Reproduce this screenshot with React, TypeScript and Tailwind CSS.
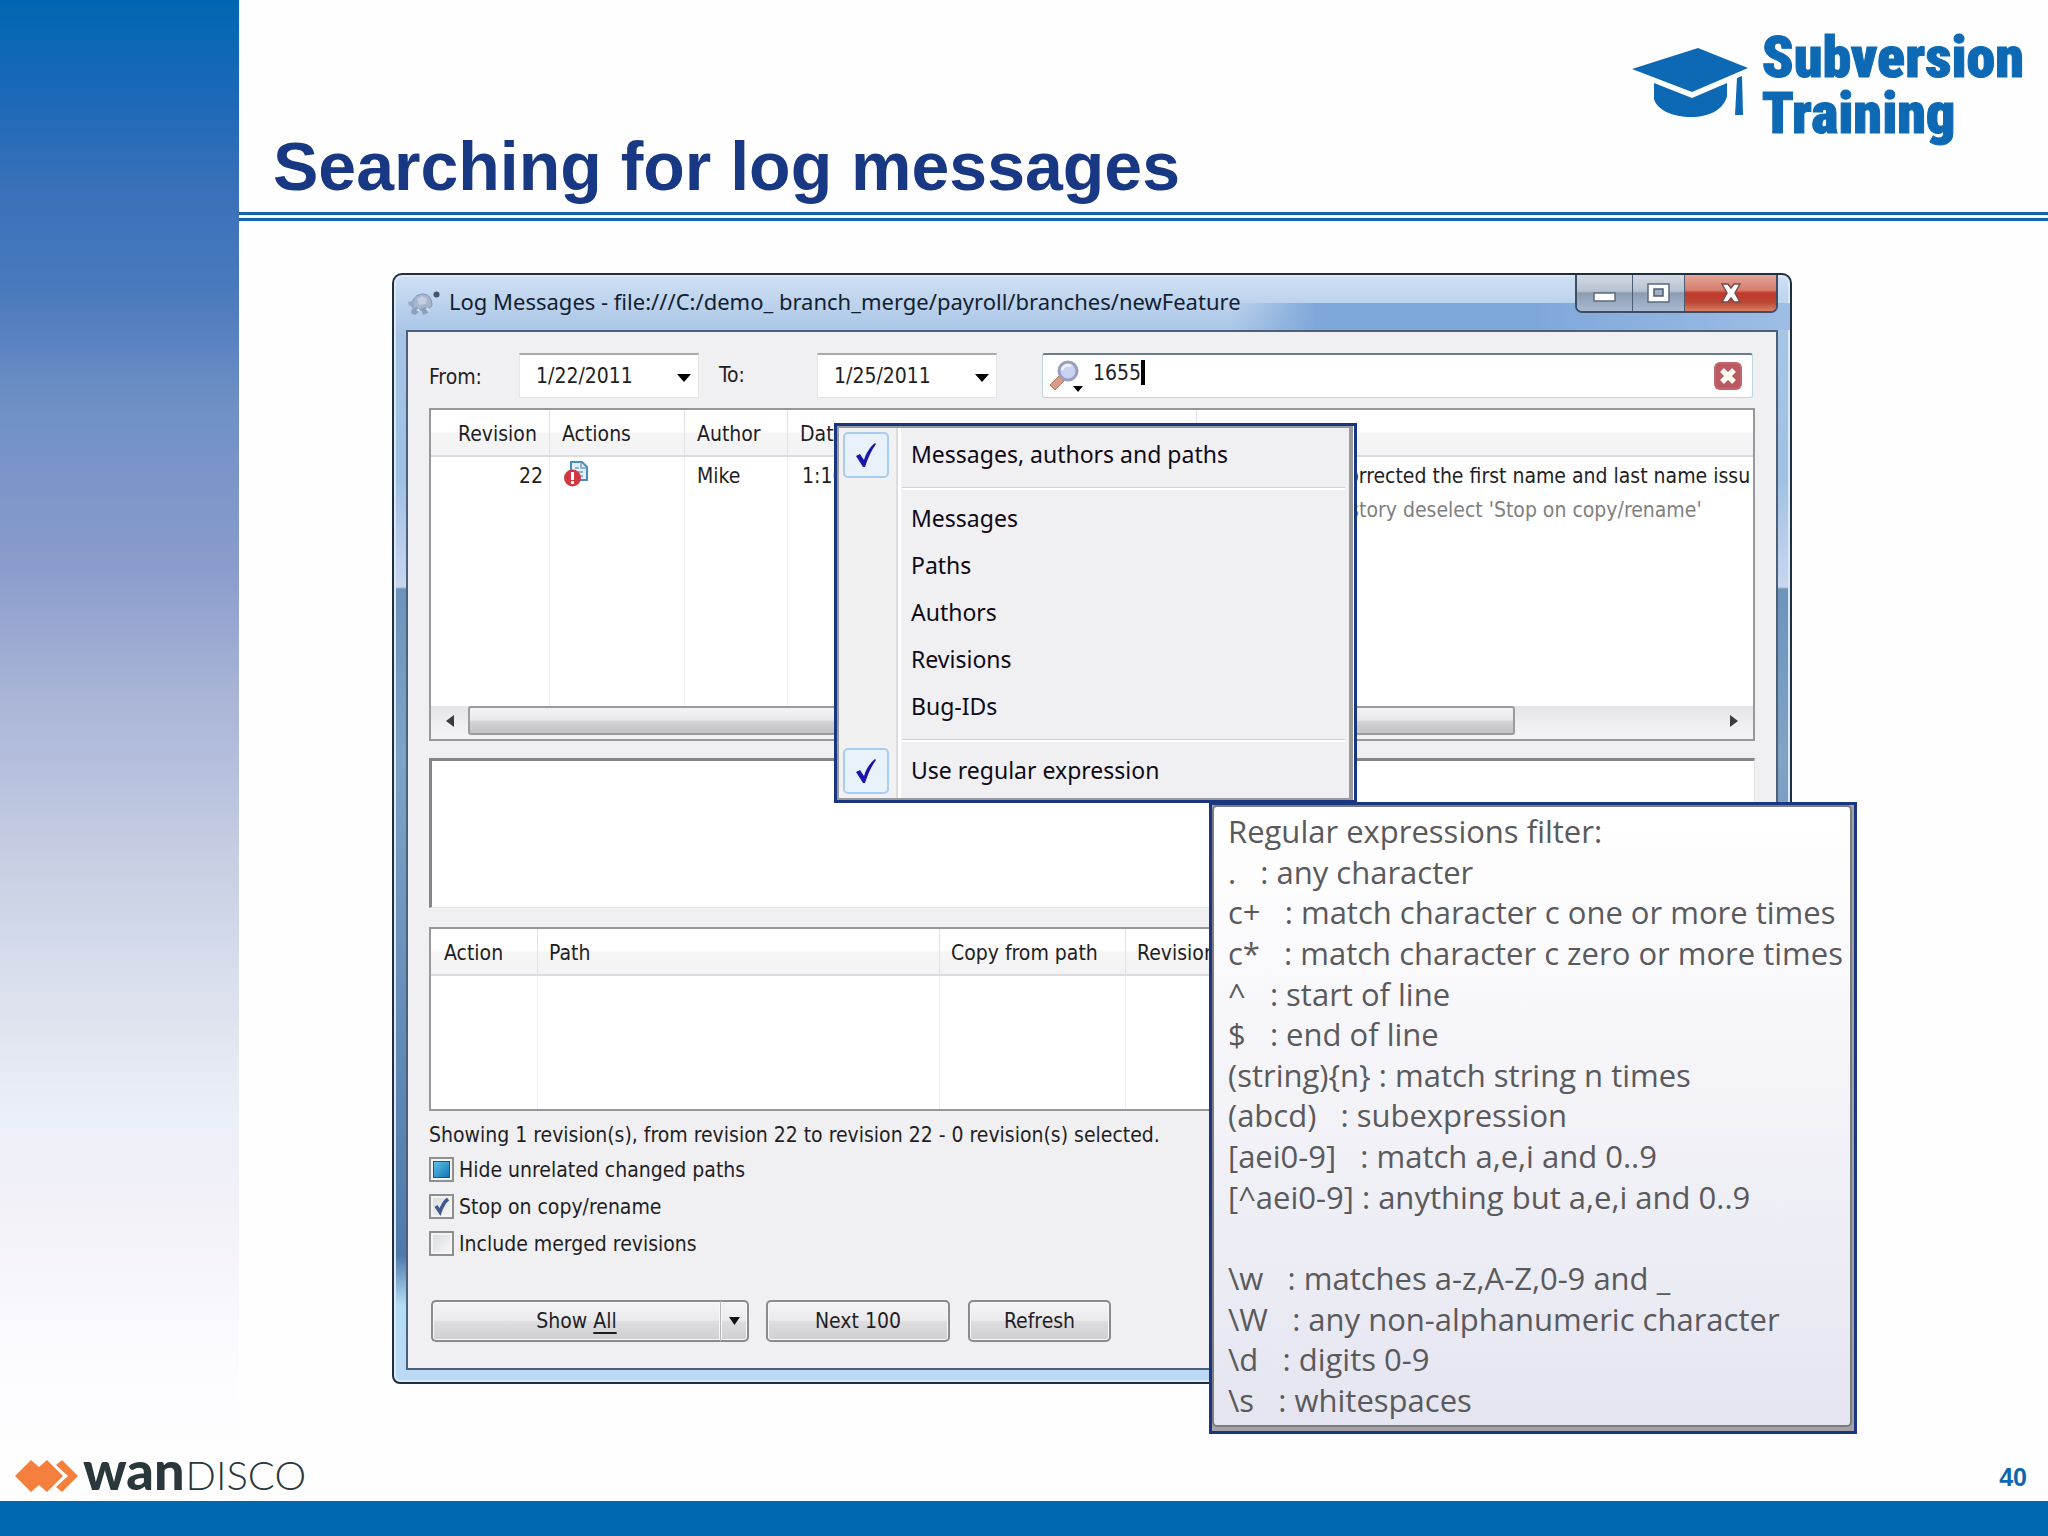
import type { ReactNode } from "react";

const SEGOE = "font-['Noto_Sans',sans-serif]";
const TAHOMA = "font-['DejaVu_Sans_Condensed','DejaVu_Sans',sans-serif]";

function GradCap() {
  return (
    <svg className="mt-[14px] h-[69px] w-[117px]" viewBox="0 0 117 69" fill="#0d69b4" aria-hidden="true">
      <path d="M66 0 L116 20 L60 44 L0 21 Z" />
      <path d="M22 35 L60 50 L95 35 V48 C92 61 78 69 59 69 C41 69 25 62 22 51 Z" />
      <path d="M105 30 L110 28 L111 67 H103 Z" />
    </svg>
  );
}

function Header() {
  return (
    <header className="border-b-[3px] border-[#0f66ad]">
      <div className="mb-[3px] flex h-[215px] justify-between border-b-[3px] border-[#0f66ad] pr-[24px] pl-[34px]">
        <h1 className="self-end pb-[5px] font-['Liberation_Sans',Arial,sans-serif] text-[68px] leading-[82px] font-bold text-[#183884]">
          Searching for log messages
        </h1>
        <div className="flex gap-[13px] pt-[34px]">
          <GradCap />
          <p className="-mt-[5px] font-['Roboto_Condensed','Open_Sans_Condensed',sans-serif] text-[58px] leading-[56px] font-black text-[#0d69b4] [-webkit-text-stroke:1px_#0d69b4]">
            Subversion
            <br />
            Training
          </p>
        </div>
      </div>
    </header>
  );
}

function Turtle() {
  return (
    <svg className="h-[26px] w-[32px]" viewBox="0 0 32 26" aria-hidden="true">
      <path d="M4 17 C4 8 9 4 15 4 C21 4 24 9 24 16 L18 20 H9 Z" fill="#a6b6d0" stroke="#8394b4" strokeWidth="1" />
      <path d="M9 9 L14 6 L19 9 L18 14 L11 15 Z" fill="#c3cee2" />
      <path d="M0 12 L5 11 L6 15 L1 16 Z" fill="#97a8c6" />
      <path d="M4 19 L9 17 L11 22 L7 25 L3 23 Z M13 18 L18 17 L20 23 L15 25 Z" fill="#8e9fbe" />
      <path d="M8 20 L11 19 L12 22 Z M17 19 L20 18 L22 21 Z" fill="#e5edf8" />
      <circle cx="28.500" cy="4.500" r="3" fill="#42536e" />
    </svg>
  );
}

function WindowButtons() {
  const plain =
    "flex items-center justify-center border-r border-[#4b5d76] bg-[linear-gradient(#d3dae3_0%,#b7c2d0_45%,#8c9cb2_50%,#a9bbd1_100%)]";
  return (
    <div className="flex h-[38px] overflow-hidden rounded-b-[7px] border-2 border-t-0 border-[#3e4d63]">
      <button aria-label="Minimize" className={`${plain} w-[56px]`}>
        <svg className="mt-[8px] h-[12px] w-[26px]" viewBox="0 0 26 12">
          <rect x="2" y="2" width="21" height="8" fill="#fff" stroke="#5b6a80" strokeWidth="1.500" />
        </svg>
      </button>
      <button aria-label="Maximize" className={`${plain} w-[52px]`}>
        <svg className="h-[20px] w-[26px]" viewBox="0 0 26 20">
          <rect x="2" y="1" width="21" height="18" fill="#fff" stroke="#5b6a80" strokeWidth="1.500" />
          <rect x="8" y="6" width="9" height="7" fill="#a4b1c3" stroke="#4d5c72" strokeWidth="1.500" />
        </svg>
      </button>
      <button
        aria-label="Close"
        className="flex w-[91px] items-center justify-center bg-[linear-gradient(#e3a598_0%,#d57e6c_42%,#c2382a_50%,#bb4534_75%,#d97f62_100%)]"
      >
        <svg className="h-[22px] w-[26px]" viewBox="0 0 26 22">
          <path
            d="M4 2 H10 L13 6 L16 2 H22 L17 11 L22 20 H16 L13 16 L10 20 H4 L9 11 Z"
            fill="#fff"
            stroke="#7a4a47"
            strokeWidth="1.500"
          />
        </svg>
      </button>
    </div>
  );
}

function DateField({ id, label, value, className }: { id: string; label: string; value: string; className: string }) {
  return (
    <>
      <label htmlFor={id} className={className}>
        {label}
      </label>
      <div className="relative w-[180px]">
        <select
          id={id}
          className="h-full w-full appearance-none border border-t-2 border-[#e6e6e6] border-t-[#a9a9a9] bg-white pr-8 pl-[16px]"
        >
          <option>{value}</option>
        </select>
        <svg className="pointer-events-none absolute top-[21px] right-[8px] h-[8px] w-[14px]" viewBox="0 0 14 8">
          <path d="M0 0 H14 L7 8 Z" fill="#000" />
        </svg>
      </div>
    </>
  );
}

function SearchBox() {
  return (
    <div className="ml-[45px] flex flex-1 items-center rounded-[3px] border border-t-2 border-[#bcd7e0] border-t-[#6b7d88] bg-white pr-[10px] pl-[5px]">
      <svg className="h-[34px] w-[36px]" viewBox="0 0 36 34" aria-hidden="true">
        <path d="M2 26 L11 17 L16 22 L7 31 Z" fill="#d79b86" stroke="#b97660" strokeWidth="1" />
        <circle cx="20" cy="12" r="9" fill="#c9d3f2" stroke="#9a9fc0" strokeWidth="3" />
        <path d="M14 11 C15 7 19 5 23 7" stroke="#eef2fd" strokeWidth="3" fill="none" />
        <path d="M25 27 H35 L30 33 Z" fill="#000" />
      </svg>
      <input
        aria-label="Search log messages"
        defaultValue="1655"
        className="mb-[7px] ml-[9px] w-[48px] bg-transparent leading-[28px] outline-none"
      />
      <span className="mb-[7px] h-[25px] w-[4px] bg-black" />
      <button aria-label="Clear search" className="ml-auto">
        <svg className="h-[28px] w-[28px]" viewBox="0 0 28 28">
          <rect x="0" y="0" width="28" height="28" rx="6" fill="#c5646a" />
          <rect x="2" y="2" width="24" height="24" rx="4" fill="#b95961" />
          <path d="M8 8 L20 20 M20 8 L8 20" stroke="#fffaf0" strokeWidth="5.500" />
        </svg>
      </button>
    </div>
  );
}

const headRow = "h-[47px] bg-[linear-gradient(#ffffff_45%,#f5f5f6_50%,#f3f3f5_100%)]";
const headCell = "border-b-2 border-b-[#dcdcde] border-r border-r-[#e2e2e4] pt-[3px] text-left font-normal";
const bodyCell = "border-r border-[#f0eef2]";

function RevisionList() {
  return (
    <div className="mt-[10px] flex h-[333px] flex-col border-2 border-[#98989b] bg-white">
      <table className="h-px w-full flex-1 table-fixed border-separate border-spacing-0">
        <colgroup>
          <col className="w-[119px]" />
          <col className="w-[135px]" />
          <col className="w-[103px]" />
          <col className="w-[409px]" />
          <col />
        </colgroup>
        <thead>
          <tr className={headRow}>
            <th className={`${headCell} pl-[27px]`}>Revision</th>
            <th className={`${headCell} pl-[12px]`}>Actions</th>
            <th className={`${headCell} pl-[12px]`}>Author</th>
            <th className={`${headCell} pl-[12px]`}>Date</th>
            <th className={`${headCell} border-r-0`} aria-label="Message" />
          </tr>
        </thead>
        <tbody>
          <tr className="h-[36px]">
            <td className={`${bodyCell} pt-[2px] pr-[6px] text-right`}>22</td>
            <td className={`${bodyCell} pl-[14px]`}>
              <svg className="-mt-[2px] h-[26px] w-[25px]" viewBox="0 0 25 26" aria-label="Modified and copied">
                <path d="M7 1 H18 L23 6 V19 H7 Z" fill="#e2effa" stroke="#4d8cba" strokeWidth="2" />
                <path d="M17 1 V7 H23 M11 7 H15 M14 11 H19 M16 15 H19" fill="none" stroke="#6aa2c9" strokeWidth="1.500" />
                <circle cx="8.500" cy="17" r="8.500" fill="#cf3a42" />
                <rect x="7" y="11" width="3" height="8" fill="#fff" />
                <rect x="7" y="20" width="3" height="3" fill="#fff" />
              </svg>
            </td>
            <td className={`${bodyCell} pt-[2px] pl-[12px]`}>Mike</td>
            <td className={`${bodyCell} pt-[2px] pl-[14px]`}>1:16</td>
            <td className="overflow-hidden pt-[2px] pl-[137px] whitespace-nowrap">
              Corrected the first name and last name issu
            </td>
          </tr>
          <tr className="h-[33px]">
            <td className={bodyCell} />
            <td className={bodyCell} />
            <td className={bodyCell} />
            <td className={bodyCell} />
            <td className="pl-[135px] whitespace-nowrap text-[#808080]">history deselect 'Stop on copy/rename'</td>
          </tr>
          <tr>
            <td className={bodyCell} />
            <td className={bodyCell} />
            <td className={bodyCell} />
            <td className={bodyCell} />
            <td />
          </tr>
        </tbody>
      </table>
      <div className="flex h-[33px] shrink-0 bg-[linear-gradient(#e4e4e6,#f0eff1_60%,#f3f2f4)] pb-[4px]">
        <button aria-label="Scroll left" className="flex w-[37px] items-center justify-center">
          <svg className="h-[12px] w-[8px]" viewBox="0 0 8 12">
            <path d="M8 0 V12 L0 6 Z" fill="#3c3c40" />
          </svg>
        </button>
        <div className="flex flex-1">
          <div className="w-[84%] rounded-[3px] border-2 border-[#9c9a9d] bg-[linear-gradient(#f3f2f4_0%,#e8e7e9_48%,#d2d1d4_55%,#c4c3c6_100%)]" />
        </div>
        <button aria-label="Scroll right" className="flex w-[38px] items-center justify-center">
          <svg className="h-[12px] w-[8px]" viewBox="0 0 8 12">
            <path d="M0 0 V12 L8 6 Z" fill="#3c3c40" />
          </svg>
        </button>
      </div>
    </div>
  );
}

function PathList() {
  return (
    <table className="mt-[19px] h-[184px] w-full table-fixed border-separate border-spacing-0 border-2 border-[#98989b] bg-white">
      <colgroup>
        <col className="w-[107px]" />
        <col className="w-[402px]" />
        <col className="w-[186px]" />
        <col />
      </colgroup>
      <thead>
        <tr className={headRow}>
          <th className={`${headCell} pl-[13px]`}>Action</th>
          <th className={`${headCell} pl-[11px]`}>Path</th>
          <th className={`${headCell} pl-[11px]`}>Copy from path</th>
          <th className={`${headCell} border-r-0 pl-[11px]`}>Revision</th>
        </tr>
      </thead>
      <tbody>
        <tr>
          <td className={bodyCell} />
          <td className={bodyCell} />
          <td className={bodyCell} />
          <td />
        </tr>
      </tbody>
    </table>
  );
}

function CheckOption({ label, checked, mark }: { label: string; checked: boolean; mark?: ReactNode }) {
  return (
    <label className="flex h-[37px] items-center gap-[5px]">
      <span className="relative h-[25px] w-[25px]">
        <input
          type="checkbox"
          defaultChecked={checked}
          className="block h-full w-full appearance-none border-2 border-[#8e8f8f] bg-[linear-gradient(135deg,#d9dade,#f8f8f8)] outline-2 -outline-offset-4 outline-[#f4f4f4]"
        />
        <span className="pointer-events-none absolute inset-0 flex items-center justify-center">{mark}</span>
      </span>
      {label}
    </label>
  );
}

const pushButton =
  "h-[42px] rounded-[5px] border-2 border-[#8b8a8d] bg-[linear-gradient(#f4f3f5_0%,#ebeaec_48%,#dddcde_52%,#d0cfd1_100%)] shadow-[inset_0_0_0_1px_#f8f8f8]";

function BottomBar() {
  return (
    <div className="mt-[38px] flex pl-[2px]">
      <div className="flex w-[318px]">
        <button className={`${pushButton} flex-1 rounded-r-none border-r-0`}>
          Show <span className="underline underline-offset-4">All</span>
        </button>
        <button
          aria-label="Show options"
          className={`${pushButton} flex w-[29px] items-center justify-center rounded-l-none border-l border-l-[#b5b4b7]`}
        >
          <svg className="h-[8px] w-[11px]" viewBox="0 0 11 8">
            <path d="M0 0 H11 L5.500 8 Z" fill="#111" />
          </svg>
        </button>
      </div>
      <button className={`${pushButton} ml-[17px] w-[184px]`}>Next 100</button>
      <button className={`${pushButton} ml-[18px] w-[143px]`}>Refresh</button>
    </div>
  );
}

function MenuItem({ label, checked }: { label: string; checked?: boolean }) {
  return (
    <button role="menuitemcheckbox" aria-checked={!!checked} className="flex h-[47px] w-full items-center text-left">
      <span className="flex w-[72px] pl-[4px]">
        {checked && (
          <span className="flex h-[46px] w-[46px] items-center justify-center rounded-[5px] border-2 border-[#a9cdf2] bg-[#e9f2fb]">
            <svg className="h-[24px] w-[20px]" viewBox="0 0 20 24">
              <path d="M0 13 L4 11 L8 17 C10 10 14 4 19 0 L20 1 C15 8 12 15 9 24 H7 Z" fill="#1a14a8" />
            </svg>
          </span>
        )}
      </span>
      <span className="pb-[2px]">{label}</span>
    </button>
  );
}

const MenuLine = () => (
  <div className="mt-[9px] mr-[4px] mb-[5px] ml-[63px] h-[3px] border-t border-b-2 border-[#ffffff] border-t-[#d2d1d3]" />
);

function FilterMenu() {
  return (
    <div
      role="menu"
      className={`absolute top-[148px] left-[440px] w-[523px] border-[3px] border-[#1a3680] bg-white pr-px text-[23px] leading-[30px] text-[#0d0a18] ${SEGOE}`}
    >
      <div className="border-2 border-r-4 border-[#97999a] bg-[linear-gradient(90deg,#f1f1f2_57px,#dcdcde_57px,#dcdcde_59px,#ffffff_59px,#ffffff_62px,#f0eff1_62px)] pt-[3px] pb-[4px]">
        <MenuItem label="Messages, authors and paths" checked />
        <MenuLine />
        <MenuItem label="Messages" />
        <MenuItem label="Paths" />
        <MenuItem label="Authors" />
        <MenuItem label="Revisions" />
        <MenuItem label="Bug-IDs" />
        <MenuLine />
        <MenuItem label="Use regular expression" checked />
      </div>
    </div>
  );
}

const HELP = [
  "Regular expressions filter:",
  ".   : any character",
  "c+   : match character c one or more times",
  "c*   : match character c zero or more times",
  "^   : start of line",
  "$   : end of line",
  "(string){n} : match string n times",
  "(abcd)   : subexpression",
  "[aei0-9]   : match a,e,i and 0..9",
  "[^aei0-9] : anything but a,e,i and 0..9",
  "",
  "\\w   : matches a-z,A-Z,0-9 and _",
  "\\W   : any non-alphanumeric character",
  "\\d   : digits 0-9",
  "\\s   : whitespaces",
];

function RegexTooltip() {
  return (
    <div
      role="tooltip"
      className="absolute top-[527px] left-[815px] w-[648px] border-[3px] border-[#1a3680] bg-[#a2a2a6] pr-[2px] pb-[4px] font-['Open_Sans',sans-serif] text-[31px] leading-[40px] text-[#5a595c]"
    >
      <div className="flex h-[622px] flex-col justify-between rounded-[5px] border-2 border-[#7c7c7e] bg-[linear-gradient(#ffffff,#fbfbfd_20%,#f1f1f7_55%,#e4e5f0)] pt-[4px] pb-[5px] pl-[14px] whitespace-pre">
        {HELP.map((line, i) => (
          <p key={i} className="h-[40px]">
            {line}
          </p>
        ))}
      </div>
    </div>
  );
}

function LogWindow() {
  return (
    <section className="relative mt-[52px] mr-[256px] ml-[153px] rounded-t-[10px] rounded-b-[8px] border-2 border-[#1f2f42] bg-[linear-gradient(#cfe0f3_0px,#a7c4e6_60px,#9fc0e3_200px,#c9d6ee_312px,#6d93bb_314px,#7fa3c6_480px,#4f79ad_980px,#b3dcf3_1030px,#bcd9f4_100%)] shadow-[inset_0_0_0_2px_#dbe9f6]">
      <div className="flex h-[55px] justify-between bg-[linear-gradient(90deg,transparent_60%,#7fa8da_66%,#7fa8da_82%,#9dbde4_100%)] bg-[length:100%_50%] bg-bottom bg-no-repeat pr-[12px] pl-[14px]">
        <div className={`flex items-center gap-[9px] text-[22px] text-[#14202f] ${SEGOE}`}>
          <Turtle />
          <h2 className="pb-[2px]">Log Messages - file:///C:/demo_ branch_merge/payroll/branches/newFeature</h2>
        </div>
        <WindowButtons />
      </div>
      <div
        className={`mx-[12px] mb-[12px] border-2 border-[#4c6079] bg-[#f0eff1] pr-[21px] pb-[26px] pl-[21px] text-[21px] leading-[28px] text-[#1f1e24] ${TAHOMA}`}
      >
        <div className="mr-[2px] flex h-[66px] pt-[21px]">
          <DateField id="from" label="From:" value="1/22/2011" className="w-[90px] pt-[10px]" />
          <DateField id="to" label="To:" value="1/25/2011" className="ml-[20px] w-[98px] pt-[8px]" />
          <SearchBox />
        </div>
        <RevisionList />
        <textarea
          aria-label="Log message"
          className="mt-[17px] block h-[150px] w-full resize-none border border-t-[3px] border-l-[3px] border-[#e6e5e7] border-t-[#858587] border-l-[#858587] bg-white outline-none"
        />
        <PathList />
        <p className="mt-[10px] mb-[2px]">Showing 1 revision(s), from revision 22 to revision 22 - 0 revision(s) selected.</p>
        <CheckOption
          label="Hide unrelated changed paths"
          checked
          mark={<span className="h-[17px] w-[17px] border border-[#135a86] bg-[linear-gradient(135deg,#5fc0e8,#1576b4)]" />}
        />
        <CheckOption
          label="Stop on copy/rename"
          checked
          mark={
            <svg className="h-[19px] w-[16px]" viewBox="0 0 16 19">
              <path d="M2 9 L6 15 C8 9 10 5 14 2" fill="none" stroke="#41598e" strokeWidth="3.500" />
            </svg>
          }
        />
        <CheckOption label="Include merged revisions" checked={false} />
        <BottomBar />
      </div>
      <FilterMenu />
      <RegexTooltip />
    </section>
  );
}

function Footer() {
  return (
    <footer className="border-b-[35px] border-[#0067b1]">
      <div className="flex h-[49px] items-center justify-between pr-[21px] pb-[2px] pl-[15px]">
        <div className="flex items-center text-[#2a373b]">
          <svg className="mr-[4px] h-[32px] w-[64px]" viewBox="0 0 64 32" fill="#f5803e" aria-hidden="true">
            <path d="M0 16 L16 0 L24 7 L32 0 L48 16 L32 32 L24 25 L16 32 Z" />
            <path d="M41 5 L47 0 L63 16 L47 32 L41 27 L53 16 Z" />
          </svg>
          <p className="flex items-baseline gap-[1px] font-['Lato',sans-serif] leading-[49px]">
            <span className="-mt-[8px] text-[54px] font-black">wan</span>
            <span className="text-[40px] font-light">DISCO</span>
          </p>
        </div>
        <span className="pt-[4px] font-['Liberation_Sans',Arial,sans-serif] text-[25px] font-bold text-[#0d67b0]">40</span>
      </div>
    </footer>
  );
}

export default function App() {
  return (
    <div className="flex min-h-screen flex-col bg-[#fefefe]">
      <div className="flex flex-1">
        <aside className="w-[239px] shrink-0 bg-[linear-gradient(#0066b3_0%,#1d69b7_7%,#3a70ba_13%,#4a79bd_20%,#6f90c6_28%,#8a9ccc_39%,#a9b4d7_48%,#c3cce2_58%,#d8deeb_67%,#ebeff7_77%,#f3f1f8_83%,#fbfaff_93%,#fefefe_100%)]" />
        <main className="min-w-0 flex-1">
          <Header />
          <LogWindow />
        </main>
      </div>
      <Footer />
    </div>
  );
}
